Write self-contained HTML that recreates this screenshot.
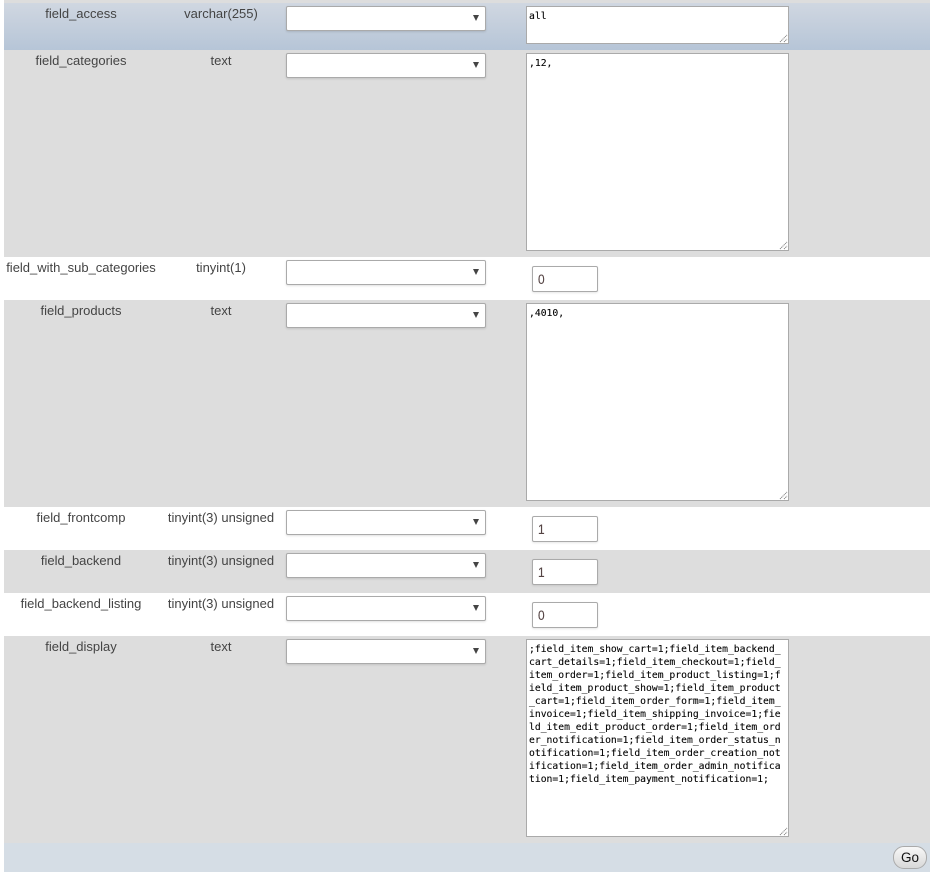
<!DOCTYPE html>
<html>
<head>
<meta charset="utf-8">
<style>
html,body{margin:0;padding:0;background:#fff;}
body{width:942px;height:889px;position:relative;overflow:hidden;font-family:"Liberation Sans",Arial,sans-serif;font-size:13px;color:#444;}
.r{position:absolute;left:4px;width:926px;}
.g{background:#ddd;}
.c{position:absolute;text-align:center;white-space:nowrap;line-height:15px;}
.n{left:4px;width:154px;}
.t{left:158px;width:126px;}
.s{position:absolute;left:286px;width:198px;height:23px;background:#fff;border:1px solid #aaa;border-radius:2px;box-shadow:0 1px 2px rgba(0,0,0,.12);}
.s:after{content:"";position:absolute;left:185.5px;top:8px;border-left:3.5px solid transparent;border-right:3.5px solid transparent;border-top:6.5px solid #444;}
.a{position:absolute;left:526px;width:261px;background:#fff;border:1px solid #aaa;font-family:"DejaVu Sans Mono","Liberation Mono",monospace;font-size:9.73px;line-height:13px;color:#000;box-sizing:content-box;-webkit-text-stroke:.1px #000;}
.a div{position:absolute;left:2px;top:3px;white-space:pre;}
.a svg{position:absolute;right:0;bottom:0;}
.i{position:absolute;left:532px;width:64px;height:24px;background:#fff;border:1px solid #aaa;border-radius:2px;box-shadow:0 1px 2px rgba(0,0,0,.1);font-size:14px;line-height:24px;color:#544;-webkit-text-stroke:.1px #544;}
.i span{position:absolute;left:4.5px;top:0;display:block;transform:scaleX(.85);transform-origin:0 50%;}
.go{position:absolute;left:893px;top:846px;width:32px;height:21px;border:1px solid #aaa;border-radius:11px;background:linear-gradient(#f8f8f8,#d8d8d8);font-size:13.5px;line-height:21px;text-align:center;color:#111;}
</style>
</head>
<body>
<div class="r g" style="top:0;height:3px"></div>
<div class="r" style="top:3px;height:47px;background:linear-gradient(#d0d7e1,#b6c5d7)"></div>
<div class="r g" style="top:50px;height:207px"></div>
<div class="r g" style="top:300px;height:207px"></div>
<div class="r g" style="top:550px;height:43px"></div>
<div class="r g" style="top:636px;height:207px"></div>
<div class="r" style="top:843px;height:29px;background:#d5dde5"></div>

<div class="c n" style="top:6px">field_access</div><div class="c t" style="top:6px">varchar(255)</div>
<div class="c n" style="top:53px">field_categories</div><div class="c t" style="top:53px">text</div>
<div class="c n" style="top:260px">field_with_sub_categories</div><div class="c t" style="top:260px">tinyint(1)</div>
<div class="c n" style="top:303px">field_products</div><div class="c t" style="top:303px">text</div>
<div class="c n" style="top:510px">field_frontcomp</div><div class="c t" style="top:510px">tinyint(3) unsigned</div>
<div class="c n" style="top:553px">field_backend</div><div class="c t" style="top:553px">tinyint(3) unsigned</div>
<div class="c n" style="top:596px">field_backend_listing</div><div class="c t" style="top:596px">tinyint(3) unsigned</div>
<div class="c n" style="top:639px">field_display</div><div class="c t" style="top:639px">text</div>

<div class="s" style="top:6px"></div>
<div class="s" style="top:53px"></div>
<div class="s" style="top:260px"></div>
<div class="s" style="top:303px"></div>
<div class="s" style="top:510px"></div>
<div class="s" style="top:553px"></div>
<div class="s" style="top:596px"></div>
<div class="s" style="top:639px"></div>

<div class="a" style="top:6px;height:36px"><div>all</div><svg width="9" height="9"><path d="M1 8L8 1M5 8L8 5" stroke="#888" stroke-width="1" fill="none" stroke-dasharray="1.2 .6"/></svg></div>
<div class="a" style="top:53px;height:196px"><div>,12,</div><svg width="9" height="9"><path d="M1 8L8 1M5 8L8 5" stroke="#888" stroke-width="1" fill="none" stroke-dasharray="1.2 .6"/></svg></div>
<div class="a" style="top:303px;height:196px"><div>,4010,</div><svg width="9" height="9"><path d="M1 8L8 1M5 8L8 5" stroke="#888" stroke-width="1" fill="none" stroke-dasharray="1.2 .6"/></svg></div>
<div class="a" style="top:639px;height:196px"><div>;field_item_show_cart=1;field_item_backend_
cart_details=1;field_item_checkout=1;field_
item_order=1;field_item_product_listing=1;f
ield_item_product_show=1;field_item_product
_cart=1;field_item_order_form=1;field_item_
invoice=1;field_item_shipping_invoice=1;fie
ld_item_edit_product_order=1;field_item_ord
er_notification=1;field_item_order_status_n
otification=1;field_item_order_creation_not
ification=1;field_item_order_admin_notifica
tion=1;field_item_payment_notification=1;</div><svg width="9" height="9"><path d="M1 8L8 1M5 8L8 5" stroke="#888" stroke-width="1" fill="none" stroke-dasharray="1.2 .6"/></svg></div>

<div class="i" style="top:266px"><span>0</span></div>
<div class="i" style="top:516px"><span>1</span></div>
<div class="i" style="top:559px"><span>1</span></div>
<div class="i" style="top:602px"><span>0</span></div>

<div class="go">Go</div>
</body>
</html>
